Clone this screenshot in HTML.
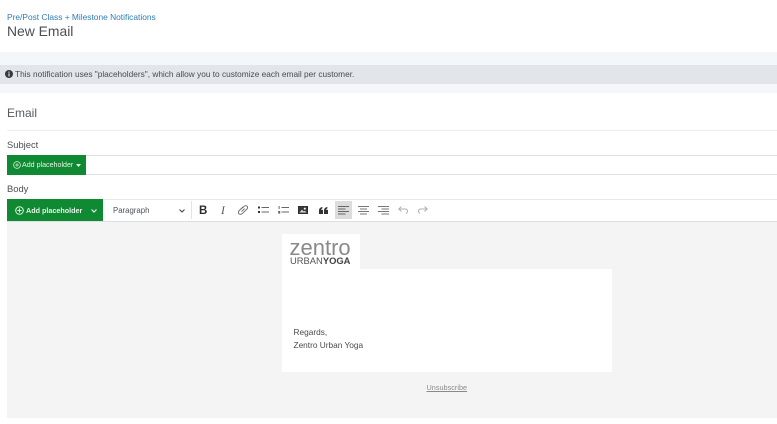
<!DOCTYPE html>
<html>
<head>
<meta charset="utf-8">
<style>
html,body{margin:0;padding:0;background:#fff}
body{width:777px;height:424px;position:relative;overflow:hidden;font-family:"Liberation Sans",sans-serif;color:#444b52}
.a{position:absolute;white-space:nowrap}
svg{position:absolute;overflow:visible}
</style>
</head>
<body>
<div class="a" style="left:7px;top:10.5px;font-size:8.4px;line-height:12px;color:#2f7cb5">Pre/Post Class + Milestone Notifications</div>
<div class="a" style="left:7px;top:21.5px;font-size:13.9px;line-height:18px;color:#4a4f55">New Email</div>

<div class="a" style="left:0;top:52px;width:777px;height:41px;background:#f4f7f9"></div>
<div class="a" style="left:0;top:65px;width:777px;height:19px;background:#e2e6eb"></div>
<svg style="left:5px;top:70px" width="8" height="8" viewBox="0 0 8 8"><circle cx="4" cy="4" r="4" fill="#343a40"/><rect x="3.4" y="3.4" width="1.2" height="3" fill="#e2e6eb"/><rect x="3.4" y="1.6" width="1.2" height="1.1" fill="#e2e6eb"/></svg>
<div class="a" style="left:15px;top:68px;font-size:8.3px;line-height:12px;color:#464c53">This notification uses "placeholders", which allow you to customize each email per customer.</div>

<div class="a" style="left:7px;top:105.5px;font-size:12px;line-height:15px;color:#555b61">Email</div>
<div class="a" style="left:7px;top:130px;width:770px;height:1px;background:#eceef0"></div>

<div class="a" style="left:7px;top:139px;font-size:9.4px;line-height:12px;color:#4a4f55">Subject</div>
<div class="a" style="left:7px;top:155px;width:770px;border-top:1px solid #dfe2e5;border-bottom:1px solid #dfe2e5;height:18px"></div>
<div class="a" style="left:7px;top:155px;width:79px;height:20px;background:#0f8a32"></div>
<svg style="left:13px;top:161px" width="8" height="8" viewBox="0 0 8 8"><circle cx="4" cy="4" r="3.4" fill="none" stroke="#d5ecd9" stroke-width=".8"/><path d="M4 2.2V5.8M2.2 4H5.8" stroke="#d5ecd9" stroke-width=".8"/></svg>
<div class="a" style="left:22px;top:159px;font-size:7.1px;line-height:12px;color:#e6f3e8">Add placeholder</div>
<svg style="left:75.5px;top:163.5px" width="5" height="3" viewBox="0 0 5 3"><path d="M0 0H5L2.5 3Z" fill="#e6f3e8"/></svg>

<div class="a" style="left:7px;top:183px;font-size:9.4px;line-height:12px;color:#4a4f55">Body</div>
<div class="a" style="left:7px;top:199px;width:770px;height:23px;background:#fff;border-bottom:1px solid #dcdfe2;box-sizing:border-box;box-shadow:inset 0 1px 0 #e6e8ea"></div>
<div class="a" style="left:7px;top:199px;width:96px;height:22px;background:#0f8a32"></div>
<svg style="left:15px;top:206px" width="9" height="9" viewBox="0 0 9 9"><circle cx="4.5" cy="4.5" r="3.8" fill="none" stroke="#e6f3e8" stroke-width="1"/><path d="M4.5 2.4V6.6M2.4 4.5H6.6" stroke="#e6f3e8" stroke-width="1"/></svg>
<div class="a" style="left:26px;top:204px;font-size:7.2px;line-height:13px;font-weight:bold;color:#e6f3e8">Add placeholder</div>
<svg style="left:91px;top:209px" width="6" height="4" viewBox="0 0 6 4"><path d="M.5 .5L3 3L5.5 .5" fill="none" stroke="#e6f3e8" stroke-width="1.2"/></svg>
<div class="a" style="left:113px;top:204px;font-size:7.8px;line-height:13px;color:#4e5359">Paragraph</div>
<svg style="left:178.5px;top:209px" width="6" height="4" viewBox="0 0 6 4"><path d="M.5 .5L3 3L5.5 .5" fill="none" stroke="#444" stroke-width="1.1"/></svg>
<div class="a" style="left:191px;top:201px;width:1px;height:18px;background:#e2e4e6"></div>

<div class="a" style="left:335px;top:201px;width:17px;height:18px;background:#dcdcdc"></div>
<div class="a" style="left:199px;top:203.5px;font-size:11.5px;line-height:14px;font-weight:bold;color:#2b2b2b">B</div>
<div class="a" style="left:221px;top:203.5px;font-size:11.5px;line-height:14px;font-style:italic;font-family:'Liberation Serif',serif;color:#555">I</div>
<svg style="left:238px;top:205px" width="10" height="10" viewBox="0 0 10 10"><path fill="none" stroke="#666" stroke-width=".9" d="M4.2 3.2L6.2 1.3C7.2.4 8.6.6 9.2 1.3C9.8 2.2 9.6 3.2 9 3.9L4.8 8.2C3.6 9.4 1.9 9.6 1 8.8C.2 8 .3 6.5 1.3 5.5L4.9 2M3.5 6.6L6.6 3.6"/></svg>
<svg style="left:258px;top:206px" width="11" height="8" viewBox="0 0 11 8"><rect x="0" y=".5" width="2" height="2" fill="#333"/><rect x="0" y="5" width="2" height="2" fill="#333"/><path d="M3.5 1.5H11M3.5 6H11" stroke="#666" stroke-width="1"/></svg>
<svg style="left:278px;top:205px" width="11" height="10" viewBox="0 0 11 10"><rect x=".6" y="1" width="1" height="3" fill="#666"/><rect x=".2" y="6" width="2" height="2.6" fill="#666"/><path d="M3.5 2.5H11M3.5 7H11" stroke="#666" stroke-width="1"/></svg>
<svg style="left:298px;top:206px" width="10" height="8" viewBox="0 0 10 8"><rect x=".5" y=".5" width="9" height="7" fill="#3a3a3a" stroke="#2f2f2f"/><circle cx="6.8" cy="2.6" r="1" fill="#fff"/><path d="M1.5 6.5L4 3.8L5.8 5.5L6.8 4.8L8.5 6.5Z" fill="#ddd"/></svg>
<svg style="left:319px;top:207px" width="9" height="7" viewBox="0 0 9 7"><path d="M0 7V3.6C0 1.6 1.2.4 3.4 0V1.4C2.6 1.6 2.2 2.2 2.2 2.9H4V7ZM5 7V3.6C5 1.6 6.2.4 8.4 0V1.4C7.6 1.6 7.2 2.2 7.2 2.9H9V7Z" fill="#333"/></svg>
<svg style="left:338px;top:206px" width="11" height="8" viewBox="0 0 11 8"><path d="M0 .5H11M0 3H7.5M0 5.5H11M0 8H7.5" stroke="#666" stroke-width=".9"/></svg>
<svg style="left:358px;top:206px" width="11" height="8" viewBox="0 0 11 8"><path d="M0 .5H11M2 3H9M0 5.5H11M2 8H9" stroke="#777" stroke-width=".9"/></svg>
<svg style="left:378px;top:206px" width="11" height="8" viewBox="0 0 11 8"><path d="M0 .5H11M3.5 3H11M0 5.5H11M3.5 8H11" stroke="#777" stroke-width=".9"/></svg>
<svg style="left:398px;top:206px" width="10" height="8" viewBox="0 0 10 8"><path d="M3.5 .5L.8 3L3.5 5.5M1 3H7C8.6 3 9.5 4 9.5 5.2C9.5 6.4 8.8 7 8 7.5" fill="none" stroke="#b0b0b0" stroke-width="1"/></svg>
<svg style="left:418px;top:206px" width="10" height="8" viewBox="0 0 10 8"><path d="M6.5 .5L9.2 3L6.5 5.5M9 3H3C1.4 3 .5 4 .5 5.2C.5 6.4 1.2 7 2 7.5" fill="none" stroke="#b0b0b0" stroke-width="1"/></svg>

<div class="a" style="left:7px;top:222px;width:770px;height:195.5px;background:#f4f4f4"></div>
<div class="a" style="left:282px;top:234px;width:78px;height:36px;background:#fff"></div>
<div class="a" style="left:282px;top:269px;width:330px;height:103px;background:#fff"></div>
<div class="a" style="left:289.5px;top:236px;font-size:22px;line-height:24px;color:#8a8a8a">zentro</div>
<div class="a" style="left:290px;top:255px;font-size:9.4px;line-height:11px;color:#555">URBAN<b style="color:#444">YOGA</b></div>
<div class="a" style="left:293.5px;top:326px;font-size:8.3px;line-height:12.5px;color:#4a4a4a">Regards,<br>Zentro Urban Yoga</div>
<div class="a" style="left:426.5px;top:382px;font-size:7.3px;line-height:12px;color:#8a8a8a;text-decoration:underline">Unsubscribe</div>
</body>
</html>
